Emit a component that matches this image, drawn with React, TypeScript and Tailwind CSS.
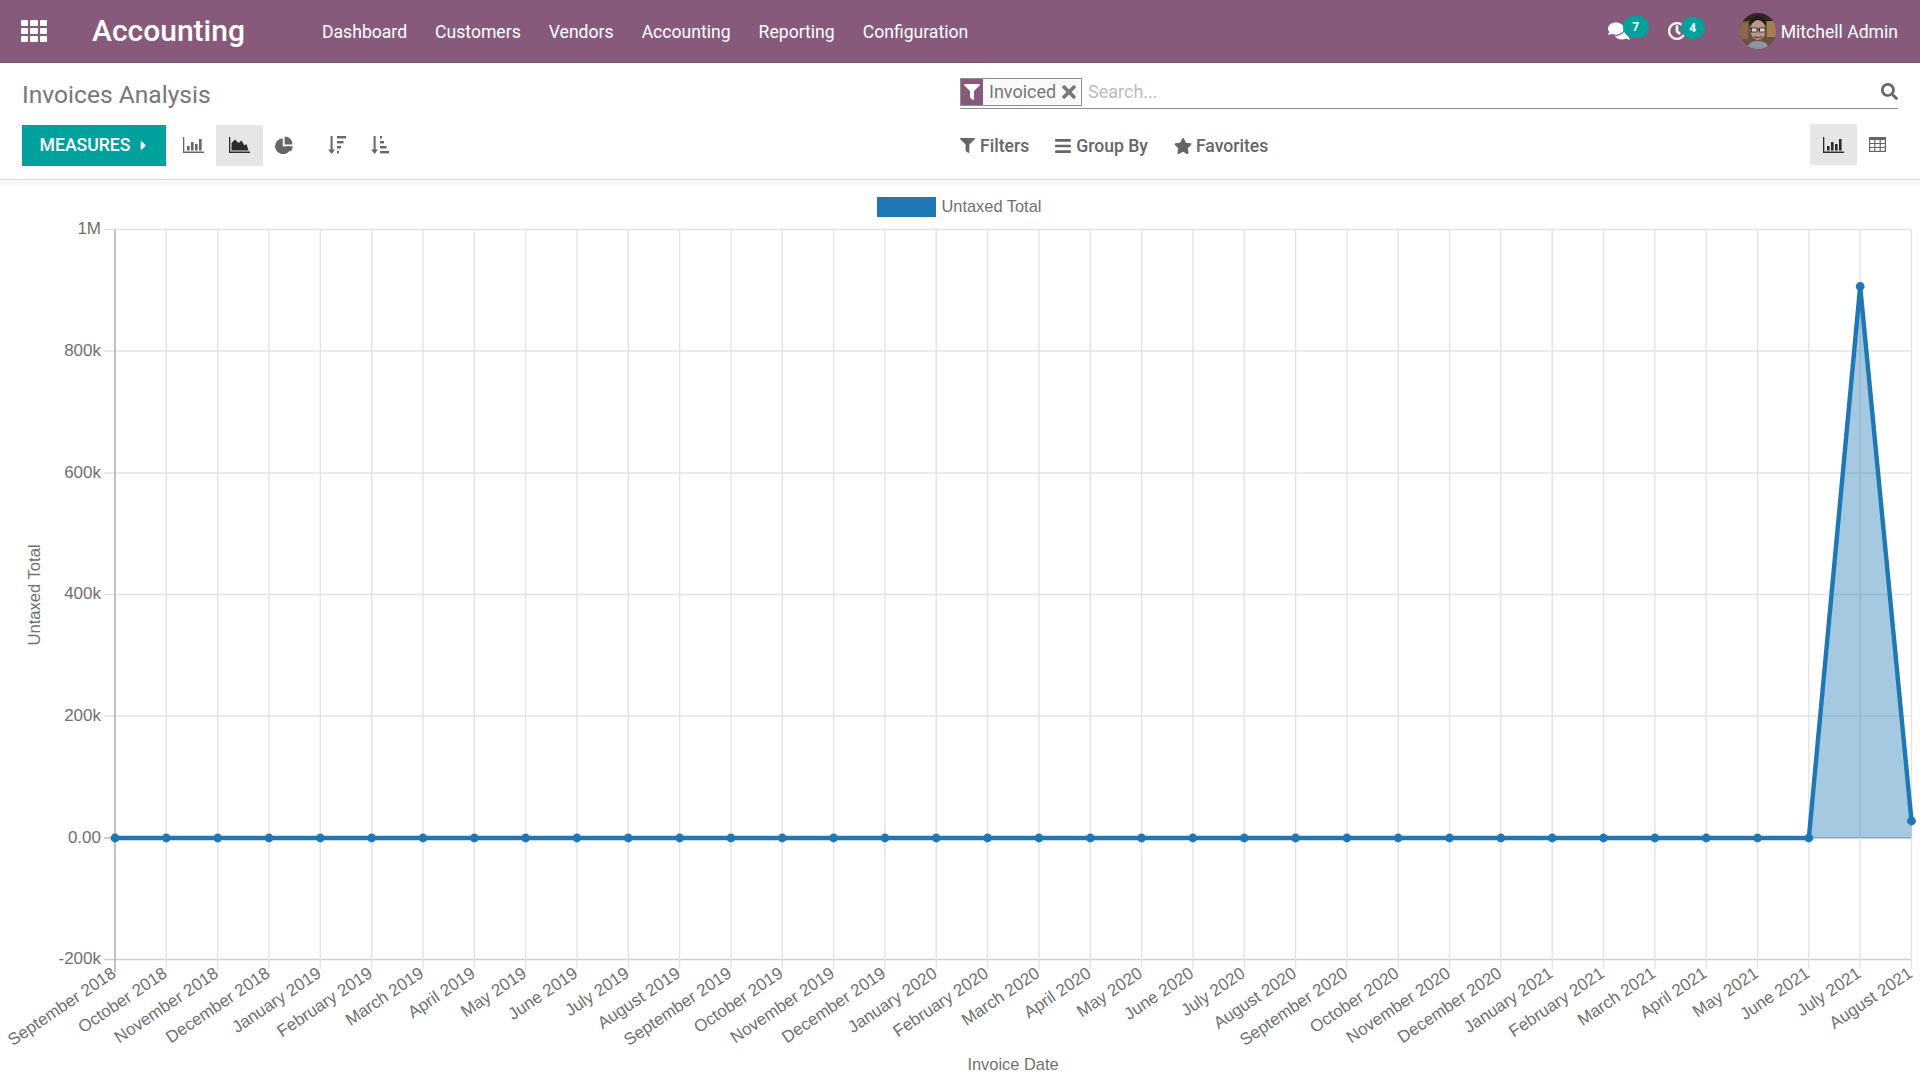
import { FaCaretRight, FaComments, FaFilter, FaRegClock, FaSearch, FaStar, FaTimes, FaBars } from "react-icons/fa";

const months = [
  "September 2018", "October 2018", "November 2018", "December 2018",
  "January 2019", "February 2019", "March 2019", "April 2019", "May 2019", "June 2019", "July 2019", "August 2019",
  "September 2019", "October 2019", "November 2019", "December 2019",
  "January 2020", "February 2020", "March 2020", "April 2020", "May 2020", "June 2020", "July 2020", "August 2020",
  "September 2020", "October 2020", "November 2020", "December 2020",
  "January 2021", "February 2021", "March 2021", "April 2021", "May 2021", "June 2021", "July 2021", "August 2021",
];

const navItems = ["Dashboard", "Customers", "Vendors", "Accounting", "Reporting", "Configuration"];

const yTicks = [
  { label: "1M", y: 229.5 },
  { label: "800k", y: 351 },
  { label: "600k", y: 473 },
  { label: "400k", y: 594.5 },
  { label: "200k", y: 716 },
  { label: "0.00", y: 838 },
  { label: "-200k", y: 959.5 },
];

const xLeft = 115;
const xStep = (1911.5 - 115) / 35;
const xAt = (i: number) => xLeft + i * xStep;

function yAt(i: number) {
  if (i === 34) return 286.5;
  if (i === 35) return 821;
  return 838;
}

function AppsIcon() {
  return (
    <div className="grid grid-cols-3 gap-[2px] w-[26px]">
      {Array.from({ length: 9 }).map((_, i) => (
        <div key={i} className="h-[6px] bg-white rounded-[1px]" />
      ))}
    </div>
  );
}

function BarIcon({ className }: { className: string }) {
  return (
    <svg viewBox="0 0 21 16" className={className} fill="currentColor">
      <path d="M0 0h1.3v14.6H21V16H0z" />
      <rect x="4" y="9" width="2.6" height="4.5" />
      <rect x="8" y="5" width="2.6" height="8.5" />
      <rect x="12" y="7" width="2.6" height="6.5" />
      <rect x="16" y="2" width="2.6" height="11.5" />
    </svg>
  );
}

function AreaIcon({ className }: { className: string }) {
  return (
    <svg viewBox="0 0 21 16" className={className} fill="currentColor">
      <path d="M0 0h1.3v14.6H21V16H0z" />
      <path d="M2.5 13.5V6l3.5-3.5 3.5 3.5 3-2.5 3 5 2-1.5 2 6.5z" />
    </svg>
  );
}

function PieIcon({ className }: { className: string }) {
  return (
    <svg viewBox="0 0 18 18" className={className} fill="currentColor">
      <path d="M7.8 2.2v8.2h8.2A8 8 0 1 1 7.8 2.2z" />
      <path d="M9.6 0.4a8 8 0 0 1 8 8h-8z" />
      <path d="M10.4 10.2h7.4a8 8 0 0 1-2.2 5.2z" />
    </svg>
  );
}

function SortDescIcon({ className }: { className: string }) {
  return (
    <svg viewBox="0 0 18 18" className={className} fill="currentColor">
      <path d="M2.6 0h2v13.5h2.4L3.6 18 .2 13.5h2.4z" />
      <rect x="9" y="0" width="9" height="2.4" />
      <rect x="9" y="5" width="6.5" height="2.4" />
      <rect x="9" y="10" width="4" height="2.4" />
      <rect x="9" y="15" width="2" height="2.4" />
    </svg>
  );
}

function SortAscIcon({ className }: { className: string }) {
  return (
    <svg viewBox="0 0 18 18" className={className} fill="currentColor">
      <path d="M2.6 0h2v13.5h2.4L3.6 18 .2 13.5h2.4z" />
      <rect x="9" y="0" width="2" height="2.4" />
      <rect x="9" y="5" width="4" height="2.4" />
      <rect x="9" y="10" width="6.5" height="2.4" />
      <rect x="9" y="15" width="9" height="2.4" />
    </svg>
  );
}

function TableIcon({ className }: { className: string }) {
  return (
    <svg viewBox="0 0 17 15" className={className} fill="none" stroke="currentColor" strokeWidth="1.2">
      <rect x="0.6" y="0.6" width="15.8" height="13.8" />
      <path d="M0.6 1.8h15.8" strokeWidth="2.4" />
      <path d="M0.6 6.5h15.8M0.6 10.5h15.8M5.8 1.8v12.6M11.2 1.8v12.6" />
    </svg>
  );
}

function Avatar() {
  return (
    <svg viewBox="0 0 36 36" className="w-[36px] h-[36px] rounded-full">
      <rect width="36" height="36" fill="#6b5140" />
      <rect x="0" y="0" width="36" height="8" fill="#33261f" />
      <rect x="27" y="8" width="9" height="16" fill="#a47f4f" />
      <rect x="0" y="10" width="8" height="16" fill="#8a6a48" />
      <path d="M9 13c0-7 4-10 9-10s9 3 8 10l-2-3H12z" fill="#241b18" />
      <ellipse cx="18" cy="17" rx="7.5" ry="10" fill="#b9978a" />
      <path d="M10 16h7v1h2v-1h7" stroke="#2e2826" strokeWidth="1.2" fill="none" />
      <rect x="11.5" y="15" width="5.5" height="4" fill="#dcd3cf" stroke="#2e2826" strokeWidth="0.8" />
      <rect x="19.5" y="15" width="5.5" height="4" fill="#dcd3cf" stroke="#2e2826" strokeWidth="0.8" />
      <path d="M14 23.5c2 1.5 6 1.5 8 0" stroke="#5e4034" strokeWidth="1.2" fill="none" />
      <path d="M7 36c1-6 5-8 11-8s10 2 11 8z" fill="#8b97a0" />
    </svg>
  );
}

function Badge({ n, className }: { n: number; className: string }) {
  return (
    <span className={`absolute flex items-center justify-center rounded-full bg-[#00a09d] text-white text-[12px] font-bold h-[22px] ${className}`}>
      {n}
    </span>
  );
}

function Chart() {
  const points = months.map((_, i) => `${xAt(i)},${yAt(i)}`).join(" ");
  return (
    <svg viewBox="0 186 1920 894" className="block w-[1920px] h-[894px]" fontFamily="'Liberation Sans', Arial, sans-serif" fontSize="17" fill="#707070">
      <rect x="877" y="197" width="59" height="20" fill="#1f77b4" />
      <text x="941.5" y="212" fontSize="16.4">Untaxed Total</text>

      {yTicks.filter((t) => t.label !== "-200k" && t.label !== "0.00").map((t) => (
        <line key={t.label} x1="104" x2="1911.5" y1={t.y} y2={t.y} stroke="#e4e4e4" strokeWidth="1.4" />
      ))}
      <line x1="104" x2="1911.5" y1="959.5" y2="959.5" stroke="#d0d0d0" strokeWidth="1.4" />
      <line x1="104" x2="1911.5" y1="838" y2="838" stroke="#bdbdbd" strokeWidth="1.4" />
      {months.map((_, i) => i > 0 && (
        <line key={i} x1={xAt(i)} x2={xAt(i)} y1="229.5" y2="969" stroke="#e4e4e4" strokeWidth="1.4" />
      ))}
      <line x1={xLeft} x2={xLeft} y1="229.5" y2="972" stroke="#a9a9a9" strokeWidth="1.4" />

      <polygon points={`${xAt(33)},838 ${xAt(34)},${yAt(34)} ${xAt(35)},${yAt(35)} ${xAt(35)},838`} fill="#1f77b4" fillOpacity="0.4" />
      <polyline points={points} fill="none" stroke="#1f77b4" strokeWidth="4.4" strokeLinejoin="round" />
      {months.map((_, i) => (
        <circle key={i} cx={xAt(i)} cy={yAt(i)} r="4.4" fill="#1f77b4" />
      ))}

      {yTicks.map((t) => (
        <text key={t.label} x="101" y={t.y + 4.5} textAnchor="end">{t.label}</text>
      ))}
      {months.map((m, i) => (
        <text key={m} x={xAt(i) + 2} y="976" textAnchor="end" transform={`rotate(-34 ${xAt(i) + 2} 976)`}>{m}</text>
      ))}

      <text x="0" y="0" textAnchor="middle" fontSize="16.6" transform="translate(40 595) rotate(-90)">Untaxed Total</text>
      <text x="1013" y="1070" textAnchor="middle" fontSize="16.4">Invoice Date</text>
    </svg>
  );
}

export default function App() {
  return (
    <div className="w-[1920px] h-[1080px] overflow-hidden bg-white font-['Roboto',sans-serif]">
      <header className="h-[63px] bg-[#875a7b] border-b border-[#7a5170] flex items-center text-white">
        <div className="ml-[21px] w-[71px]">
          <AppsIcon />
        </div>
        <span className="text-[30px] font-medium w-[230px] leading-none">Accounting</span>
        <nav className="flex gap-[28px] text-[17.6px] mt-[2px]">
          {navItems.map((item) => (
            <span key={item}>{item}</span>
          ))}
        </nav>
        <div className="ml-auto flex items-center pr-[22px]">
          <div className="relative w-[41px] h-[36px] flex items-center">
            <FaComments className="w-[22px] h-[20px]" />
            <Badge n={7} className="left-[15px] top-[3px] w-[26px]" />
          </div>
          <div className="relative w-[37px] h-[36px] ml-[19px] flex items-center">
            <FaRegClock className="w-[18px] h-[18px]" stroke="currentColor" strokeWidth={20} />
            <Badge n={4} className="left-[13px] top-[4px] w-[24px]" />
          </div>
          <div className="ml-[35px] mr-[5px]">
            <Avatar />
          </div>
          <span className="text-[17.6px] mt-[2px]">Mitchell Admin</span>
        </div>
      </header>

      <div className="h-[117px] border-b border-[#d9d9d9] flex">
        <div className="w-[960px] pl-[22px]">
          <h1 className="text-[24.6px] text-[#777] leading-none mt-[20px]">Invoices Analysis</h1>
          <div className="flex items-center mt-[17px] h-[41px] text-[#666]">
            <button className="w-[144px] h-[41px] bg-[#00a09d] text-white text-[17.6px] font-medium flex items-center justify-center gap-[9px]">
              MEASURES <FaCaretRight className="w-[9px] h-[15px]" />
            </button>
            <div className="w-[50px] h-[41px] flex items-center justify-center pl-[5px]">
              <BarIcon className="w-[21px] h-[16px]" />
            </div>
            <div className="w-[47px] h-[41px] bg-[#e6e6e6] flex items-center justify-center text-[#2b2b2b]">
              <AreaIcon className="w-[21px] h-[16px]" />
            </div>
            <div className="w-[42px] h-[41px] flex items-center justify-center">
              <PieIcon className="w-[18px] h-[18px]" />
            </div>
            <div className="w-[43px] flex justify-center ml-[10px]">
              <SortDescIcon className="w-[18px] h-[18px]" />
            </div>
            <div className="w-[43px] flex justify-center">
              <SortAscIcon className="w-[18px] h-[18px]" />
            </div>
          </div>
        </div>

        <div className="flex-1 pr-[22px]">
          <div className="mt-[15px] h-[31px] border-b border-[#8f8f8f] flex items-start">
            <div className="h-[28px] w-[122px] border border-[#8f8f8f] bg-[#f9f9f9] flex items-center text-[#777]">
              <div className="w-[22px] h-full bg-[#875a7b] flex items-center justify-center">
                <FaFilter className="w-[16px] h-[16px] text-white" />
              </div>
              <span className="text-[18px] ml-[6px] leading-none">Invoiced</span>
              <FaTimes className="w-[14px] h-[20px] ml-[6px]" />
            </div>
            <span className="ml-[6px] text-[18px] text-[#bbb] leading-[28px]">Search...</span>
            <FaSearch className="w-[17px] h-[17px] ml-auto mt-[5px] text-[#666]" />
          </div>
          <div className="flex items-center mt-[15px] h-[41px]">
            <div className="flex items-center text-[17.6px] font-medium text-[#666] mt-[3px]">
              <FaFilter className="w-[15px] h-[15px] mr-[5px]" />
              <span>Filters</span>
              <FaBars className="w-[16px] h-[18px] ml-[26px] mr-[5px]" />
              <span>Group By</span>
              <FaStar className="w-[18px] h-[16px] ml-[26px] mr-[4px]" />
              <span>Favorites</span>
            </div>
            <div className="ml-auto flex items-center h-[41px] text-[#666]">
              <div className="w-[47px] h-[41px] bg-[#e6e6e6] flex items-center justify-center text-[#2b2b2b]">
                <BarIcon className="w-[21px] h-[16px]" />
              </div>
              <div className="w-[41px] flex items-center justify-center">
                <TableIcon className="w-[17px] h-[15px]" />
              </div>
            </div>
          </div>
        </div>
      </div>

      <div className="h-[6px] bg-[#f9f9f9]" />
      <Chart />
    </div>
  );
}
